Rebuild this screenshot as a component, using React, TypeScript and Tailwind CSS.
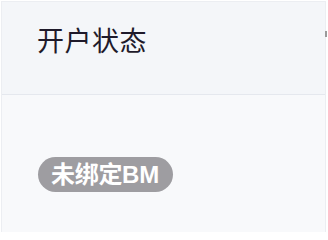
export default function App() {
  return (
    <div
      className="w-[328px] h-[232px] bg-white overflow-hidden"
      style={{ fontFamily: '"Noto Sans CJK SC", "Noto Sans", sans-serif' }}
    >
      <div className="relative ml-[1px] mt-[1px] w-[325px] h-[231px] border-l border-t border-r border-[#eceef2] flex flex-col">
        <div className="h-[93px] bg-[#f4f6f9] border-b border-[#e5e8ee] flex items-start pl-[35px] pt-[23px]">
          <span className="text-[27px] leading-[30px] text-[#1f1a2a] tracking-[0.5px]">开户状态</span>
        </div>
        <div className="flex-1 bg-[#f8f9fb] pl-[36px] pt-[62px]">
          <span
            className="inline-flex items-center h-[35px] pl-[13px] pr-[14px] rounded-full bg-[#9e9da1] text-white text-[24px] font-bold leading-none tracking-[-0.3px]"
            style={{ fontFamily: '"Liberation Sans", "Noto Sans CJK SC", sans-serif' }}
          >
            未绑定BM
          </span>
        </div>
        <div className="absolute right-[-2px] top-[29px] w-[2px] h-[6px] bg-[#9a9a9a]" />
      </div>
    </div>
  );
}
